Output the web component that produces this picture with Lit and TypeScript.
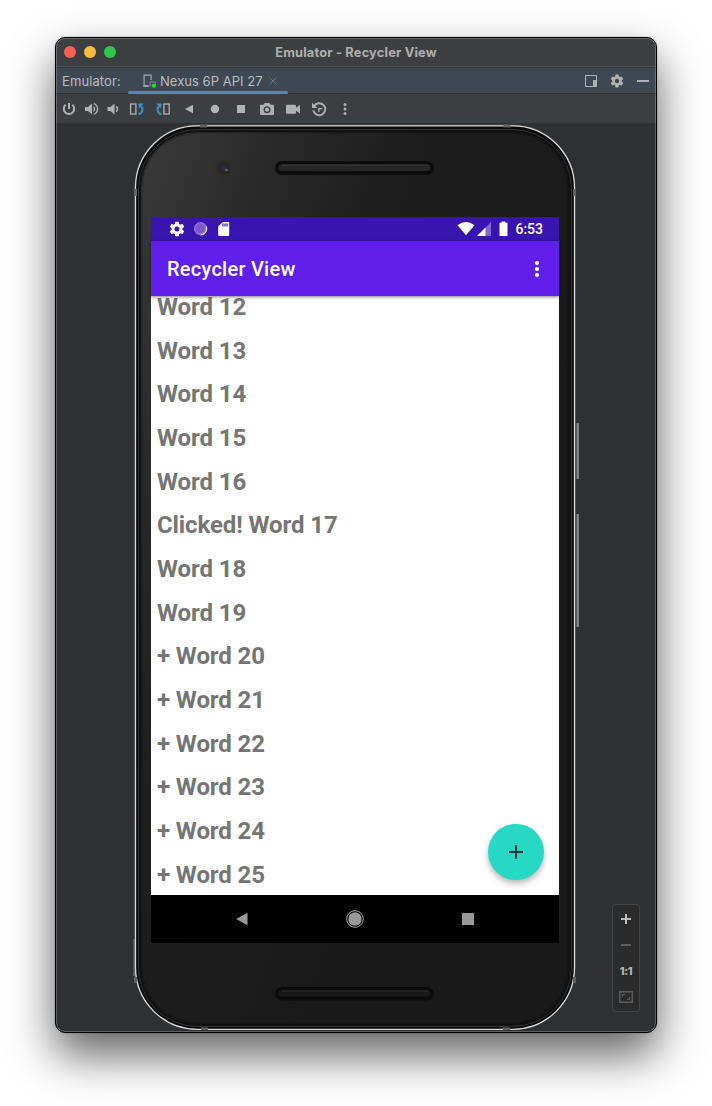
import { LitElement, html, css, svg } from "lit";
import { customElement } from "lit/decorators.js";

const GEAR = "M19.14 12.94c.04-.3.06-.61.06-.94s-.02-.64-.07-.94l2.03-1.58a.49.49 0 0 0 .12-.61l-1.92-3.32a.49.49 0 0 0-.59-.22l-2.39.96a7 7 0 0 0-1.62-.94l-.36-2.54a.48.48 0 0 0-.48-.41h-3.84a.48.48 0 0 0-.47.41l-.36 2.54c-.59.24-1.13.57-1.62.94l-2.39-.96a.48.48 0 0 0-.59.22L2.74 8.87a.48.48 0 0 0 .12.61l2.03 1.58c-.05.3-.09.63-.09.94s.02.64.07.94l-2.03 1.58a.49.49 0 0 0-.12.61l1.92 3.32c.12.22.37.29.59.22l2.39-.96c.5.38 1.03.7 1.62.94l.36 2.54c.05.24.24.41.48.41h3.84c.24 0 .44-.17.47-.41l.36-2.54a6.7 6.7 0 0 0 1.62-.94l2.39.96c.22.08.47 0 .59-.22l1.92-3.32a.48.48 0 0 0-.12-.61l-2.01-1.58zM12 15.3a3.3 3.3 0 1 1 0-6.6 3.3 3.3 0 0 1 0 6.6z";

const volume = svg`<path d="M1.5 6h3l4-3.6v11.200L4.500 10h-3z" fill="#afb1b3"/>`;
const TOOLS = [
  { narrow: true, art: svg`<path d="M8 2v6M4.600 3.800a5.200 5.200 0 1 0 6.800 0" fill="none" stroke="#afb1b3" stroke-width="2"/>` },
  { narrow: true, art: svg`<g transform="translate(.5 0)">${volume}<path d="M10 5.600q2.200 2.400 0 4.800M10.300 2.700c5 2 5 8.600 0 10.600" fill="none" stroke="#afb1b3" stroke-width="1.300"/></g>` },
  { narrow: true, art: svg`<g transform="translate(1 0)">${volume}</g><path d="M11.200 5.400q2.600 2.600 0 5.200" fill="none" stroke="#afb1b3" stroke-width="1.500"/>` },
  { narrow: false, art: svg`<rect x="1.600" y="3" width="5.300" height="10" fill="none" stroke="#afb1b3" stroke-width="1.300"/><path d="M9.600 13.300c4.600-1.400 4.800-6.200 2-8.600" fill="none" stroke="#3c93c5" stroke-width="2"/><path d="M9.300 2.400h5.500L10 7.600z" fill="#3c93c5"/>` },
  { narrow: false, art: svg`<rect x="8.900" y="3" width="5.300" height="10" fill="none" stroke="#afb1b3" stroke-width="1.300"/><path d="M6.400 13.300C1.800 11.900 1.600 7.100 4.400 4.700" fill="none" stroke="#3c93c5" stroke-width="2"/><path d="M6.700 2.400H1.200L6 7.600z" fill="#3c93c5"/>` },
  { narrow: false, art: svg`<path d="M12 3.800v8.400L4 8z" fill="#afb1b3"/>` },
  { narrow: false, art: svg`<circle cx="8" cy="8" r="4.200" fill="#afb1b3"/>` },
  { narrow: false, art: svg`<rect x="4" y="4" width="8" height="8" fill="#afb1b3"/>` },
  { narrow: false, art: svg`<path fill-rule="evenodd" d="M5.600 2h4.800l1.200 1.700H14q1 0 1 1V13q0 1-1 1H2q-1 0-1-1V4.700q0-1 1-1h2.400zM8 5.200a3.500 3.500 0 1 0 0 7 3.500 3.500 0 0 0 0-7z" fill="#afb1b3"/><circle cx="8" cy="8.700" r="2.100" fill="#afb1b3"/>` },
  { narrow: false, art: svg`<path d="M2 3.700h8q1 0 1 1v2L15 3.900v8.600L11 9.700v2q0 1-1 1H2q-1 0-1-1v-7q0-1 1-1z" fill="#afb1b3"/>` },
  { narrow: false, art: svg`<path d="M3 5.300a6 6 0 1 1-.7 4" fill="none" stroke="#afb1b3" stroke-width="1.900"/><path d="M1 1.700v5.200h5.400z" fill="#afb1b3"/><path d="M7.800 11V7.600h3.400" fill="none" stroke="#afb1b3" stroke-width="1.400"/>` },
  { narrow: false, art: svg`<circle cx="8" cy="3.500" r="1.500" fill="#afb1b3"/><circle cx="8" cy="8" r="1.500" fill="#afb1b3"/><circle cx="8" cy="12.500" r="1.500" fill="#afb1b3"/>` },
];

const WORDS = [
  "Word 12", "Word 13", "Word 14", "Word 15", "Word 16", "Clicked! Word 17", "Word 18",
  "Word 19", "+ Word 20", "+ Word 21", "+ Word 22", "+ Word 23", "+ Word 24", "+ Word 25",
];

@customElement("phone-screen")
export class PhoneScreen extends LitElement {
  static styles = css`
    :host { display: flex; flex-direction: column; width: 408px; height: 726px; background: #fff; font-family: Roboto, sans-serif; position: relative; }
    svg { display: block; flex: none; }
    .status { height: 24px; background: #3715ae; display: flex; align-items: center; padding: 0 16px 0 18px; color: #fff; flex: none; box-sizing: border-box; }
    .notes { display: flex; flex: 1; gap: 8px; align-items: center; }
    .time { font-size: 14px; font-weight: 500; margin-left: 6px; line-height: 24px; }
    .appbar { height: 55px; background: #6020e9; color: #fff; display: flex; align-items: center; justify-content: space-between; padding: 0 14px 0 16px; font-size: 20px; font-weight: 500; flex: none; box-shadow: 0 1px 3px rgba(0,0,0,.5); z-index: 1; letter-spacing: .25px; }
    .list { flex: 1; overflow: hidden; min-height: 0; position: relative; }
    .rows { margin-top: -10px; }
    .row { height: 43.680px; line-height: 43.680px; padding-left: 6px; color: #757575; font-weight: 700; font-size: 24px; letter-spacing: -.1px; white-space: nowrap; }
    .fab { position: absolute; right: 15.500px; bottom: 15.500px; width: 55.500px; height: 55.500px; border-radius: 50%; background: #27d9c5; display: flex; align-items: center; justify-content: center; box-shadow: 0 3px 5px rgba(0,0,0,.2), 0 5px 9px rgba(0,0,0,.1); }
    .nav { height: 48px; background: #000; display: flex; justify-content: center; align-items: center; flex: none; }
    .key { width: 113px; display: flex; justify-content: center; }
  `;
  render() {
    return html`
      <div class="status">
        <div class="notes">
          <svg width="16" height="16" viewBox="1.500 1.500 21 21"><path d=${GEAR} fill="#fff"/></svg>
          <svg width="16" height="16" viewBox="0 0 16 16"><circle cx="7.500" cy="7.700" r="6.600" fill="#8a67d0"/><circle cx="7.200" cy="7.400" r="5.300" fill="#7d58cb" stroke="#bba7e4" stroke-width=".7" stroke-dasharray="1 1"/><path d="M13.400 5.500A6.300 6.300 0 0 1 7.500 13.900" fill="none" stroke="#f4f0fb" stroke-width="1.200"/></svg>
          <svg width="16" height="16" viewBox="0 0 16 16"><path fill-rule="evenodd" d="M6 1h5.200q1 0 1 1v12q0 1-1 1h-9q-1 0-1-1V5.300zM5.300 2.500v3h1.200v-3zM7.400 2.500v3h1.200v-3zM9.500 2.500v3h1.200v-3z" fill="#fff"/></svg>
        </div>
        <svg width="52" height="16" viewBox="0 0 52 16">
          <path d="M.5 4.300Q9 -2.300 17.500 4.300L9 14.300z" fill="#fff"/>
          <path d="M34 1v14H20z" fill="#8566cf"/><path d="M28.500 6.500V15H20z" fill="#fff"/>
          <path d="M44.500 .5h4v1.300h2V15h-8V1.800h2z" fill="#fff"/>
        </svg>
        <span class="time">6:53</span>
      </div>
      <div class="appbar"><span>Recycler View</span>
        <svg width="16" height="20" viewBox="0 0 16 20"><circle cx="8" cy="4" r="2.100" fill="#fff"/><circle cx="8" cy="10" r="2.100" fill="#fff"/><circle cx="8" cy="16" r="2.100" fill="#fff"/></svg>
      </div>
      <div class="list">
        <div class="rows">${WORDS.map((w) => html`<div class="row">${w}</div>`)}</div>
        <div class="fab"><svg width="14" height="14" viewBox="0 0 14 14"><path d="M7 0v14M0 7h14" stroke="#08332f" stroke-width="1.900"/></svg></div>
      </div>
      <div class="nav">
        <div class="key"><svg width="12" height="14" viewBox="0 0 12 14"><path d="M11.500.800v12.400L.200 7z" fill="#999"/></svg></div>
        <div class="key"><svg width="18" height="18" viewBox="0 0 18 18"><circle cx="9" cy="9" r="8.300" fill="none" stroke="#aaa"/><circle cx="9" cy="9" r="6.700" fill="#999"/></svg></div>
        <div class="key"><svg width="12" height="12" viewBox="0 0 12 12"><rect width="12" height="12" rx=".6" fill="#999"/></svg></div>
      </div>`;
  }
}

@customElement("phone-frame")
export class PhoneFrame extends LitElement {
  static styles = css`
    :host { display: block; width: 450px; height: 908px; position: relative; }
    .shell { position: absolute; inset: 0; display: block; }
    .slot { position: relative; padding: 94px 0 0 19px; }
  `;
  render() {
    const slotArt = (y: number, h: number, tone: string, shine: string) => svg`
      <rect x="275" y=${y} width="159" height=${h} rx=${h / 2} fill="#0c0c0c"/>
      <rect x="278.500" y=${y + 3.5} width="152" height=${h - 7.5} rx="3" fill=${tone}/>
      <path d=${`M281 ${y + 4}H428`} stroke=${shine}/>`;
    return html`
      <svg class="shell" width="450" height="908" viewBox="132 123 450 908">
        <defs>
          <linearGradient id="glass" x1="0" y1="0" x2=".75" y2=".6">
            <stop offset="0" stop-color="#3b3b3b"/><stop offset=".25" stop-color="#2a2a2a"/><stop offset=".5" stop-color="#1e1e1e"/><stop offset="1" stop-color="#191919"/>
          </linearGradient>
          <linearGradient id="side" x1="0" x2="1"><stop offset="0" stop-color="#333"/><stop offset=".5" stop-color="#777"/><stop offset=".75" stop-color="#aaa"/><stop offset="1" stop-color="#444"/></linearGradient>
        </defs>
        <rect x="575.500" y="423" width="3.500" height="56" fill="url(#side)"/>
        <rect x="575.500" y="514" width="3.500" height="113" fill="url(#side)"/>
        <rect x="133.300" y="939" width="2" height="37" fill="#666"/>
        <rect x="134.500" y="124.500" width="441" height="905.500" rx="63" fill="#505050"/>
        <rect x="135.500" y="125.800" width="439" height="903.500" rx="62" fill="#0a0a0a" stroke="#d8d8d8" stroke-width="1.300"/>
        <rect x="138.500" y="129.500" width="433" height="897" rx="59" fill="#101010" stroke="#343434"/>
        <rect x="140.500" y="131.500" width="429" height="893" rx="57" fill="url(#glass)" stroke="#101010"/>
        <rect x="142" y="133" width="426" height="890" rx="55.500" fill="none" stroke="#000" stroke-opacity=".3"/>
        <g fill="#626262">
          <rect x="200" y="124.500" width="7" height="3"/><rect x="503.500" y="124.500" width="7" height="3"/>
          <rect x="134" y="189" width="3" height="7"/><rect x="573" y="189" width="3" height="7"/>
          <rect x="134" y="977" width="3" height="6"/><rect x="573" y="977" width="3" height="6"/>
          <rect x="201" y="1027.500" width="7" height="2.500"/><rect x="503" y="1027.500" width="7" height="2.500"/>
        </g>
        ${slotArt(161, 14, "#262626", "#3d3d3d")}${slotArt(987, 13.5, "#191919", "#2c2c2c")}
        <circle cx="223.500" cy="168.500" r="8" fill="#2b2b2b"/><circle cx="223.500" cy="168.500" r="5.300" fill="#27242b"/><circle cx="223.500" cy="168.500" r="3" fill="#302a3c"/><circle cx="226.500" cy="170" r="1.300" fill="#80545a"/>
      </svg>
      <div class="slot"><phone-screen></phone-screen></div>`;
  }
}

@customElement("app-root")
export class AppRoot extends LitElement {
  static styles = css`
    :host { display: block; box-sizing: border-box; width: 712px; height: 1106px; padding: 37px 0 0 55px; background: #fff; overflow: hidden; font-family: Inter, sans-serif; }
    svg { display: block; flex: none; }
    .window { width: 602px; height: 996px; box-sizing: border-box; border: 1px solid #000; border-radius: 10px; background: #2f3032; overflow: hidden; display: flex; flex-direction: column; position: relative; }
    .shade { width: 602px; height: 996px; border-radius: 10px; box-shadow: 0 22px 46px rgba(0,0,0,.62), 0 0 2px rgba(0,0,0,.3); }
    .window::after { content: ""; position: absolute; inset: 0; border: 1px solid rgba(255,255,255,.23); border-radius: 9px; }
    .title { height: 28px; background: #3c3f41; display: grid; grid-template-columns: 1fr auto 1fr; align-items: center; flex: none; color: #adafb0; font-weight: 700; font-size: 12.800px; letter-spacing: .2px; border-bottom: 1px solid #535353; }
    .lights { display: flex; gap: 8px; padding-left: 8px; }
    .light { width: 12px; height: 12px; border-radius: 50%; }
    .close { background: #ff5f57; }
    .min { background: #febc3e; }
    .max { background: #32c748; }
    .tabs { height: 27px; box-sizing: border-box; background: #3d4853; border-top: 1px solid #323435; border-bottom: 1px solid #323232; display: flex; align-items: stretch; padding: 0 5px 0 6px; color: #bbbdbf; font-size: 13px; flex: none; }
    .label { width: 66px; line-height: 26px; letter-spacing: .1px; }
    .tab { box-sizing: border-box; width: 160px; display: flex; align-items: center; padding: 1px 8px 0 14px; position: relative; }
    .tab::after { content: ""; position: absolute; left: 0; right: 0; bottom: -1px; height: 3px; border-radius: 1.500px; background: #4a88c7; }
    .name { margin: 0 5px 0 2px; white-space: nowrap; letter-spacing: .03px; }
    .actions { margin-left: auto; display: flex; gap: 10px; align-items: center; padding-top: 1px; }
    .tools { height: 29px; background: #3c3f41; display: flex; align-items: center; padding-left: 2px; flex: none; }
    .tool { width: 26px; display: flex; justify-content: center; }
    .narrow { width: 22px; }
    .stage { flex: 1; display: flex; padding-left: 76px; justify-content: space-between; }
    .zoom { align-self: flex-end; box-sizing: border-box; width: 28px; height: 108px; margin: 0 16px 20px 0; border: 1px solid #454545; border-radius: 4px; background: #2b2b2b; display: flex; flex-direction: column; align-items: center; padding-top: 1px; }
    .cell { height: 26px; display: flex; align-items: center; justify-content: center; }
    .ratio { font-size: 11px; font-weight: 800; color: #b5b5b5; letter-spacing: -.3px; }
  `;
  render() {
    return html`
      <div class="shade"><div class="window">
        <div class="title">
          <div class="lights"><div class="light close"></div><div class="light min"></div><div class="light max"></div></div>
          <span>Emulator - Recycler View</span>
        </div>
        <div class="tabs">
          <span class="label">Emulator:</span>
          <div class="tab">
            <svg width="16" height="16" viewBox="0 0 16 16"><path d="M6.500 13.400h-4.400v-11.200h7v4.800" fill="none" stroke="#9aa7b0" stroke-width="1.200"/><path d="M1.500 12h5v2h-5z" fill="#9aa7b0"/><path d="M8 9h5.500V10.500M8 8.500v4.500h1.500" fill="none" stroke="#9a6fc0"/><circle cx="12" cy="12.700" r="2.100" fill="#1fe32c"/></svg>
            <span class="name">Nexus 6P API 27</span>
            <svg width="10" height="10" viewBox="0 0 10 10"><path d="M1.500 1.500l7 7M8.500 1.500l-7 7" stroke="#6c757d"/></svg>
          </div>
          <div class="actions">
            <svg width="16" height="16" viewBox="0 0 16 16"><rect x="2.500" y="2.500" width="11" height="11" fill="none" stroke="#afb1b3"/><path d="M10 7h4v7h-4z" fill="#afb1b3"/></svg>
            <svg width="16" height="16" viewBox="0 0 24 24"><path d=${GEAR} fill="#afb1b3"/></svg>
            <svg width="16" height="16" viewBox="0 0 16 16"><rect x="2" y="7" width="12" height="2" fill="#afb1b3"/></svg>
          </div>
        </div>
        <div class="tools">${TOOLS.map((t) => html`<div class="tool ${t.narrow ? "narrow" : ""}"><svg width="16" height="16" viewBox="0 0 16 16">${t.art}</svg></div>`)}</div>
        <div class="stage">
          <phone-frame></phone-frame>
          <div class="zoom">
            <div class="cell"><svg width="10" height="10" viewBox="0 0 10 10"><path d="M5 0v10M0 5h10" stroke="#bcbcbc" stroke-width="2"/></svg></div>
            <div class="cell"><svg width="10" height="10" viewBox="0 0 10 10"><path d="M0 5h10" stroke="#5c5c5c" stroke-width="2"/></svg></div>
            <div class="cell ratio">1:1</div>
            <div class="cell"><svg width="14" height="12" viewBox="0 0 14 12"><rect x=".75" y=".75" width="12.500" height="10.500" fill="none" stroke="#5c5c5c" stroke-width="1.500"/><path d="M3.500 6V3.500H6M8 8.500h2.500V6" fill="none" stroke="#5c5c5c"/></svg></div>
          </div>
        </div>
      </div></div>`;
  }
}
